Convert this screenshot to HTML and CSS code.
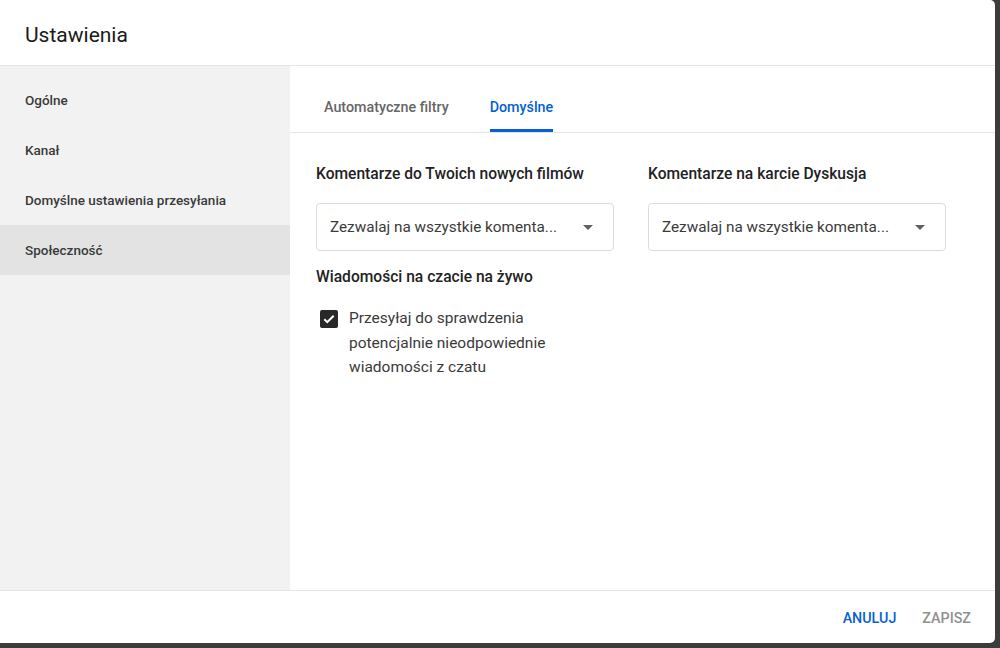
FILE: index.html
```html
<!DOCTYPE html>
<html lang="pl">
<head>
    <meta charset="UTF-8">
    <meta name="viewport" content="width=device-width, initial-scale=1.0">
    <title>Ustawienia</title>
    <link rel="stylesheet" href="styles.css">
</head>
<body>
    <div class="dialog">
        <div class="header">
            <h1>Ustawienia</h1>
        </div>
        <div class="main">
            <div class="sidebar">
                <div class="nav-item">Ogólne</div>
                <div class="nav-item">Kanał</div>
                <div class="nav-item">Domyślne ustawienia przesyłania</div>
                <div class="nav-item active">Społeczność</div>
            </div>
            <div class="content">
                <div class="tabs">
                    <div class="tab">Automatyczne filtry</div>
                    <div class="tab selected">Domyślne</div>
                </div>
                <div class="form">
                    <div class="columns">
                        <div class="field">
                            <div class="label">Komentarze do Twoich nowych filmów</div>
                            <div class="dropdown">
                                <span>Zezwalaj na wszystkie komenta...</span>
                                <span class="arrow"></span>
                            </div>
                        </div>
                        <div class="field">
                            <div class="label">Komentarze na karcie Dyskusja</div>
                            <div class="dropdown">
                                <span>Zezwalaj na wszystkie komenta...</span>
                                <span class="arrow"></span>
                            </div>
                        </div>
                    </div>
                    <div class="label chat-label">Wiadomości na czacie na żywo</div>
                    <div class="check-row">
                        <div class="checkbox">
                            <svg width="14" height="14" viewBox="0 0 24 24"><path d="M4 12.5l5 5L20 6.5" fill="none" stroke="#fff" stroke-width="3.4"/></svg>
                        </div>
                        <div class="check-text">Przesyłaj do sprawdzenia<br>potencjalnie nieodpowiednie<br>wiadomości z czatu</div>
                    </div>
                </div>
            </div>
        </div>
        <div class="footer">
            <button class="btn primary">ANULUJ</button>
            <button class="btn disabled">ZAPISZ</button>
        </div>
    </div>
</body>
</html>
```

FILE: styles.css
```css
body {
    margin: 0;
    background-color: #3c3c3c;
    font-family: Roboto, "Noto Sans", Arial, sans-serif;
    color: #0d0d0d;
}
.dialog {
    width: 995px;
    height: 643px;
    background-color: #fff;
    border-radius: 0 5px 5px 0;
    display: flex;
    flex-direction: column;
    overflow: hidden;
}
.header {
    height: 66px;
    box-sizing: border-box;
    border-bottom: 1px solid #e5e5e5;
    display: flex;
    align-items: center;
    padding: 4px 25px 0;
}
h1 {
    margin: 0;
    font-size: 21px;
    font-weight: 400;
    color: #1a1a1a;
}
.main {
    flex: 1;
    display: flex;
    min-height: 0;
}
.sidebar {
    width: 290px;
    background-color: #f2f2f2;
    padding-top: 9px;
    box-sizing: border-box;
}
.nav-item {
    height: 50px;
    display: flex;
    align-items: center;
    padding-left: 25px;
    font-size: 13.5px;
    font-weight: 500;
    color: #3a3a3a;
}
.nav-item.active {
    background-color: #e3e3e3;
}
.content {
    flex: 1;
}
.tabs {
    height: 67px;
    box-sizing: border-box;
    border-bottom: 1px solid #e5e5e5;
    display: flex;
    align-items: flex-end;
    gap: 41px;
    padding-left: 34px;
}
.tab {
    height: 50px;
    box-sizing: border-box;
    padding-top: 17px;
    font-size: 14.3px;
    font-weight: 500;
    color: #666;
    border-bottom: 3px solid transparent;
}
.tab.selected {
    color: #065fd4;
    border-bottom-color: #065fd4;
}
.form {
    padding: 29px 26px 0;
}
.columns {
    display: flex;
    gap: 34px;
}
.field {
    width: 298px;
}
.label {
    font-size: 15.6px;
    font-weight: 500;
    line-height: 24px;
    color: #222;
}
.dropdown {
    margin-top: 17px;
    height: 48px;
    box-sizing: border-box;
    border: 1px solid #dcdcdc;
    border-radius: 4px;
    display: flex;
    align-items: center;
    justify-content: space-between;
    padding: 0 20px 0 13px;
    font-size: 15.3px;
    color: #3a3a3a;
}
.arrow {
    width: 0;
    height: 0;
    border-left: 5px solid transparent;
    border-right: 5px solid transparent;
    border-top: 5px solid #606060;
}
.chat-label {
    margin-top: 14px;
}
.check-row {
    display: flex;
    gap: 11px;
    margin-top: 17px;
    padding-left: 4px;
}
.checkbox {
    width: 18px;
    height: 18px;
    margin-top: 4px;
    background-color: #282828;
    border-radius: 2px;
    display: flex;
    align-items: center;
    justify-content: center;
}
.check-text {
    font-size: 15.5px;
    line-height: 24.5px;
    color: #3a3a3a;
}
.footer {
    height: 53px;
    box-sizing: border-box;
    border-top: 1px solid #e5e5e5;
    display: flex;
    align-items: center;
    justify-content: flex-end;
    gap: 26px;
    padding: 2px 24px 0 0;
}
.btn {
    background: none;
    border: none;
    padding: 0;
    font-family: inherit;
    font-size: 14.3px;
    font-weight: 500;
    cursor: pointer;
}
.btn.primary {
    color: #065fd4;
}
.btn.disabled {
    color: #909090;
}
```
